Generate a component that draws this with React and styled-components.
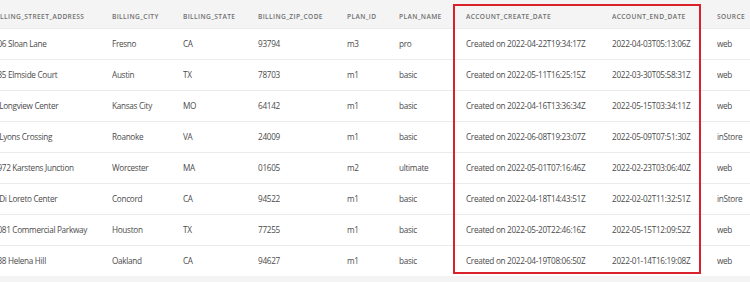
import React from "react";
import styled, { createGlobalStyle } from "styled-components";

const Global = createGlobalStyle`
  html, body { margin: 0; padding: 0; background: #f4f4f4; }
  body { font-family: "Open Sans", "Noto Sans", sans-serif; }
`;

const Page = styled.div`
  position: relative;
  width: 750px;
  height: 282px;
  overflow: hidden;
  background: #f4f4f4;
`;

const Viewport = styled.div`
  width: 750px;
  overflow: hidden;
`;

const Table = styled.table`
  border-collapse: collapse;
  table-layout: fixed;
  margin-left: -7px;
  width: 802px;
`;

const Col = styled.col`
  width: ${(p) => p.$w}px;
`;

const HeadCell = styled.th`
  height: 28px;
  padding: 5px 0 0 0;
  box-sizing: border-box;
  text-align: left;
  font-size: 6.6px;
  font-weight: 600;
  letter-spacing: 0.38px;
  color: #707070;
  background: #f4f4f4;
  white-space: nowrap;
  overflow: hidden;
`;

const Row = styled.tr`
  background: #ffffff;
  border-top: 1px solid #ebebeb;
`;

const Cell = styled.td`
  height: 31px;
  padding: 0;
  box-sizing: border-box;
  font-size: 8.2px;
  letter-spacing: -0.3px;
  color: #4b4b4b;
  white-space: nowrap;
  overflow: hidden;
`;

const Highlight = styled.div`
  position: absolute;
  left: 453px;
  top: 4px;
  width: 248px;
  height: 270px;
  box-sizing: border-box;
  border: 2px solid #d9202b;
  pointer-events: none;
`;

const widths = [119, 71, 75, 89, 52, 67, 146, 105, 78];

const headers = [
  "BILLING_STREET_ADDRESS",
  "BILLING_CITY",
  "BILLING_STATE",
  "BILLING_ZIP_CODE",
  "PLAN_ID",
  "PLAN_NAME",
  "ACCOUNT_CREATE_DATE",
  "ACCOUNT_END_DATE",
  "SOURCE",
];

const rows = [
  ["706 Sloan Lane", "Fresno", "CA", "93794", "m3", "pro", "Created on 2022-04-22T19:34:17Z", "2022-04-03T05:13:06Z", "web"],
  ["835 Elmside Court", "Austin", "TX", "78703", "m1", "basic", "Created on 2022-05-11T16:25:15Z", "2022-03-30T05:58:31Z", "web"],
  ["9 Longview Center", "Kansas City", "MO", "64142", "m1", "basic", "Created on 2022-04-16T13:36:34Z", "2022-05-15T03:34:11Z", "web"],
  ["3 Lyons Crossing", "Roanoke", "VA", "24009", "m1", "basic", "Created on 2022-06-08T19:23:07Z", "2022-05-09T07:51:30Z", "inStore"],
  ["2972 Karstens Junction", "Worcester", "MA", "01605", "m2", "ultimate", "Created on 2022-05-01T07:16:46Z", "2022-02-23T03:06:40Z", "web"],
  ["8 Di Loreto Center", "Concord", "CA", "94522", "m1", "basic", "Created on 2022-04-18T14:43:51Z", "2022-02-02T11:32:51Z", "inStore"],
  ["5081 Commercial Parkway", "Houston", "TX", "77255", "m1", "basic", "Created on 2022-05-20T22:46:16Z", "2022-05-15T12:09:52Z", "web"],
  ["738 Helena Hill", "Oakland", "CA", "94627", "m1", "basic", "Created on 2022-04-19T08:06:50Z", "2022-01-14T16:19:08Z", "web"],
];

export default function App() {
  return (
    <>
      <Global />
      <Page>
        <Viewport>
          <Table>
            <colgroup>
              {widths.map((w, i) => (
                <Col key={i} $w={w} />
              ))}
            </colgroup>
            <thead>
              <tr>
                {headers.map((h) => (
                  <HeadCell key={h}>{h}</HeadCell>
                ))}
              </tr>
            </thead>
            <tbody>
              {rows.map((r, i) => (
                <Row key={i}>
                  {r.map((c, j) => (
                    <Cell key={j}>{c}</Cell>
                  ))}
                </Row>
              ))}
            </tbody>
          </Table>
        </Viewport>
        <Highlight />
      </Page>
    </>
  );
}
